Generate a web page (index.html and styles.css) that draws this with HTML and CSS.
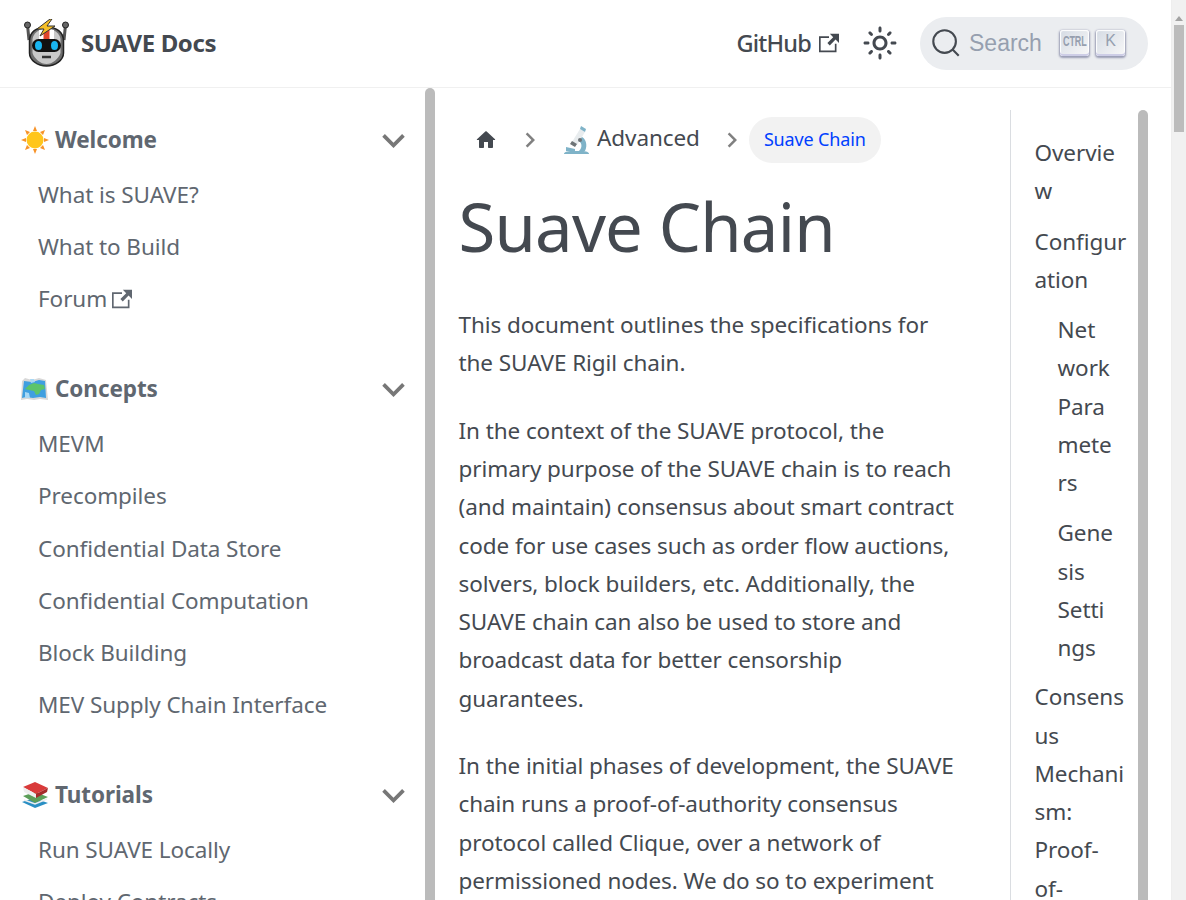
FILE: index.html
```html
<!DOCTYPE html>
<html lang="en">

<head>
    <meta charset="UTF-8">
    <title>Suave Chain | SUAVE Docs</title>
    <link rel="stylesheet" href="styles.css">
</head>

<body>
    <div class="page">
        <nav class="navbar">
            <a class="brand">
                <svg class="brand_logo" viewBox="0 0 45 48">
                    <path d="M3.500 6l1.500 15M41.500 6l-1.500 15" stroke="#555" stroke-width="3" fill="none"/>
                    <circle cx="3.500" cy="6" r="3" fill="#666" stroke="#222"/>
                    <circle cx="41.500" cy="6" r="3" fill="#666" stroke="#222"/>
                    <path d="M22.500 8c-10 0-17 5-17 14v12c0 7 8 13 17 13s17-6 17-13V22c0-9-7-14-17-14z" fill="#6d6d6d" stroke="#222" stroke-width="1.500"/>
                    <path d="M22.500 10c-8 0-13 4-14 10v14c2 6 8 11 14 11s12-5 14-11V20c-1-6-6-10-14-10z" fill="#c9c9c9"/>
                    <path d="M15 11c5-1.500 10-1.500 15 0v9H15z" fill="#fff"/>
                    <path d="M19.500 10h6v10h-6z" fill="#e0452c"/>
                    <rect x="8" y="20" width="29" height="13" rx="6.500" fill="#111"/>
                    <ellipse cx="14.500" cy="26.500" rx="3.500" ry="4.500" fill="#19b5f1"/>
                    <ellipse cx="30.500" cy="26.500" rx="3.500" ry="4.500" fill="#19b5f1"/>
                    <path d="M18 38h9" stroke="#333" stroke-width="2.500"/>
                    <path d="M26 0L13 10h7l-4 7 15-10h-8l5-7z" fill="#f6bf26" stroke="#333" stroke-width="1"/>
                </svg>
                <b>SUAVE Docs</b>
            </a>
            <div class="navbar_right">
                <a class="github">GitHub
                    <svg class="ext_icon" viewBox="0 0 24 24"><path d="M21 13v10h-21v-19h12v2h-10v15h17v-8h2zm3-12h-10.988l4.035 4-6.977 7.070 2.828 2.828 6.977-7.070 4.125 4.172v-11z"/></svg>
                </a>
                <svg class="sun" viewBox="0 0 24 24"><path d="M12,9c1.650,0,3,1.350,3,3s-1.350,3-3,3s-3-1.350-3-3S10.350,9,12,9 M12,7c-2.760,0-5,2.240-5,5s2.240,5,5,5s5-2.240,5-5 S14.760,7,12,7L12,7z M2,13l2,0c0.550,0,1-0.450,1-1s-0.450-1-1-1l-2,0c-0.550,0-1,0.450-1,1S1.450,13,2,13z M20,13l2,0c0.550,0,1-0.450,1-1 s-0.450-1-1-1l-2,0c-0.550,0-1,0.450-1,1S19.450,13,20,13z M11,2v2c0,0.550,0.450,1,1,1s1-0.450,1-1V2c0-0.550-0.450-1-1-1S11,1.450,11,2z M11,20v2c0,0.550,0.450,1,1,1s1-0.450,1-1v-2c0-0.550-0.450-1-1-1C11.450,19,11,19.450,11,20z M5.990,4.580c-0.390-0.390-1.030-0.390-1.410,0 c-0.390,0.390-0.390,1.030,0,1.410l1.060,1.060c0.390,0.390,1.030,0.390,1.410,0s0.390-1.030,0-1.410L5.990,4.580z M18.360,16.950 c-0.390-0.390-1.030-0.390-1.410,0c-0.390,0.390-0.390,1.030,0,1.410l1.060,1.060c0.390,0.390,1.030,0.390,1.410,0c0.390-0.390,0.390-1.030,0-1.410 L18.360,16.950z M19.420,5.990c0.390-0.390,0.390-1.030,0-1.410c-0.390-0.390-1.030-0.390-1.410,0l-1.060,1.060c-0.390,0.390-0.390,1.030,0,1.410 s1.030,0.390,1.410,0L19.420,5.990z M7.050,18.360c0.390-0.390,0.390-1.030,0-1.410c-0.390-0.390-1.030-0.390-1.410,0l-1.060,1.060 c-0.390,0.390-0.390,1.030,0,1.410s1.030,0.390,1.410,0L7.050,18.360z"/></svg>
                <div class="search">
                    <svg class="search_icon" viewBox="0 0 20 20"><path d="M14.386 14.386l4.088 4.088-4.088-4.088c-2.942 2.942-7.712 2.942-10.653 0-2.942-2.942-2.942-7.712 0-10.653 2.942-2.942 7.712-2.942 10.653 0 2.942 2.942 2.942 7.712 0 10.653z"/></svg>
                    <span class="search_text">Search</span>
                    <span class="keys">
                        <kbd class="key"><span class="key_ctrl">CTRL</span></kbd>
                        <kbd class="key">K</kbd>
                    </span>
                </div>
            </div>
        </nav>

        <div class="layout">
            <aside class="sidebar">
                <div class="menu">
                    <div class="cat">
                        <svg class="emoji" viewBox="0 0 28 28">
                            <g fill="#f79329"><path d="M14 0l2 5h-4zM14 28l-2-5h4zM0 14l5-2v4zM28 14l-5 2v-4zM4 4l5 2-3 3zM24 24l-5-2 3-3zM24 4l-2 5-3-3zM4 24l2-5 3 3z"/></g>
                            <circle cx="14" cy="14" r="8.500" fill="#ffc61c"/>
                        </svg>
                        <b>Welcome</b>
                        <svg class="caret" viewBox="0 0 24 24"><path d="M7.410 8.590L12 13.170l4.590-4.580L18 10l-6 6-6-6z"/></svg>
                    </div>
                    <a class="item">What is SUAVE?</a>
                    <a class="item">What to Build</a>
                    <a class="item">Forum <svg class="ext_icon" viewBox="0 0 24 24"><path d="M21 13v10h-21v-19h12v2h-10v15h17v-8h2zm3-12h-10.988l4.035 4-6.977 7.070 2.828 2.828 6.977-7.070 4.125 4.172v-11z"/></svg></a>

                    <div class="cat">
                        <svg class="emoji" viewBox="0 0 28 28">
                            <path d="M1 6l3-3 7 2 7-2 7 2 2 20-8-1-6 1-7-1-6 1z" fill="#d8d8d8"/>
                            <path d="M3 6l8 1 7-2 6 1 1 17-6-1-7 1-7-1-4 1z" fill="#3f9fe0"/>
                            <path d="M8 10l5-2 4 1 6 1 1 4-4 1-2 4-3 1-2-4-5-1-4-1z" fill="#5cc46a"/>
                            <path d="M9 4h4l1 3-4 1zM4 17l4 1 1 5-5 0z" fill="#a8d8f5"/>
                        </svg>
                        <b>Concepts</b>
                        <svg class="caret" viewBox="0 0 24 24"><path d="M7.410 8.590L12 13.170l4.590-4.580L18 10l-6 6-6-6z"/></svg>
                    </div>
                    <a class="item">MEVM</a>
                    <a class="item">Precompiles</a>
                    <a class="item">Confidential Data Store</a>
                    <a class="item">Confidential Computation</a>
                    <a class="item">Block Building</a>
                    <a class="item">MEV Supply Chain Interface</a>

                    <div class="cat">
                        <svg class="emoji" viewBox="0 0 28 28">
                            <path d="M1 21l12-4 14 5-13 5z" fill="#2a8fc4"/>
                            <path d="M2 15l12-4 13 5-13 6z" fill="#5c9e58"/>
                            <path d="M3 19l11 4 12-5" fill="none" stroke="#eee" stroke-width="1.500"/>
                            <path d="M2 6l12-5 13 6-12 6z" fill="#d93a3a"/>
                            <path d="M2 6l13 7v4L3 11z" fill="#eee"/>
                            <path d="M15 13l12-6-1 4-11 6z" fill="#a52a2a"/>
                        </svg>
                        <b>Tutorials</b>
                        <svg class="caret" viewBox="0 0 24 24"><path d="M7.410 8.590L12 13.170l4.590-4.580L18 10l-6 6-6-6z"/></svg>
                    </div>
                    <a class="item">Run SUAVE Locally</a>
                    <a class="item">Deploy Contracts</a>
                </div>
                <div class="rail"><div class="thumb"></div></div>
            </aside>

            <main class="main">
                <article class="article">
                    <ul class="crumbs">
                        <li class="crumb_home"><svg viewBox="0 0 24 24"><path d="M10 19v-5h4v5c0 .550.450 1 1 1h3c.550 0 1-.450 1-1v-7h1.700c.460 0 .680-.570.330-.870L12.670 3.600c-.380-.340-.960-.340-1.340 0l-8.360 7.530c-.340.300-.130.870.330.870H5v7c0 .550.450 1 1 1h3c.550 0 1-.450 1-1z"/></svg></li>
                        <li class="crumb_sep"><svg viewBox="0 0 24 24"><path d="M10 6L8.590 7.410 13.170 12l-4.580 4.590L10 18l6-6z"/></svg></li>
                        <li class="crumb_link">
                            <svg class="emoji" viewBox="0 0 28 28">
                                <path d="M1 28c0-2 3-3 8-3h10c4 0 7 1 7 3z" fill="#7fb3c8"/>
                                <path d="M17 10c6 2 8 9 5 15h-6c4-4 3-9-2-11z" fill="#7fb3c8"/>
                                <path d="M17 3l5 3-8 13-5-3z" fill="#e8ecee"/>
                                <path d="M9 15l5 3-2 3-5-3z" fill="#6e7477"/>
                                <path d="M18 0l5 3-1 3-5-3z" fill="#7fb3c8"/>
                                <path d="M3 21l9 2v2H3z" fill="#7fb3c8"/>
                                <circle cx="17" cy="14" r="2" fill="#6e7477"/>
                            </svg>
                            <span>Advanced</span>
                        </li>
                        <li class="crumb_sep"><svg viewBox="0 0 24 24"><path d="M10 6L8.590 7.410 13.170 12l-4.580 4.590L10 18l6-6z"/></svg></li>
                        <li class="crumb_active"><span>Suave Chain</span></li>
                    </ul>
                    <h1>Suave Chain</h1>
                    <p>This document outlines the specifications for the SUAVE Rigil chain.</p>
                    <p>In the context of the SUAVE protocol, the primary purpose of the SUAVE chain is to reach (and maintain) consensus about smart contract code for use cases such as order flow auctions, solvers, block builders, etc. Additionally, the SUAVE chain can also be used to store and broadcast data for better censorship guarantees.</p>
                    <p>In the initial phases of development, the SUAVE chain runs a proof-of-authority consensus protocol called Clique, over a network of permissioned nodes. We do so to experiment with the protocol in a safe environment.</p>
                </article>

                <div class="toc">
                    <ul class="toc_list">
                        <li>Overvie<br>w</li>
                        <li class="toc_parent">Configur<br>ation
                            <ul class="toc_sub">
                                <li>Net<br>work<br>Para<br>mete<br>rs</li>
                                <li>Gene<br>sis<br>Setti<br>ngs</li>
                            </ul>
                        </li>
                        <li>Consens<br>us<br>Mechani<br>sm:<br>Proof-<br>of-</li>
                    </ul>
                    <div class="rail"><div class="thumb"></div></div>
                </div>
            </main>
        </div>
    </div>

    <div class="page_bar">
        <div class="page_bar_up"></div>
        <div class="page_bar_thumb"></div>
    </div>
</body>

</html>
```
FILE: styles.css
```css
* {
    margin: 0;
    padding: 0;
    box-sizing: border-box;
    list-style: none;
}

html,
body {
    height: 900px;
    overflow: hidden;
}

body {
    display: flex;
    font-family: "Noto Sans", sans-serif;
    font-size: 22.5px;
    line-height: 38.25px;
    letter-spacing: -0.08px;
    color: #444950;
    background-color: #fff;
}

svg {
    flex: none;
}

.page {
    flex: 1;
    min-width: 0;
}

/* window scrollbar */
.page_bar {
    flex: none;
    width: 15px;
    padding: 0 2px 0 2px;
    background-color: #f1f1f1;
    border-left: 1px solid #eee;
}

.page_bar_up {
    width: 0;
    height: 15px;
    margin: 0 auto;
    border: solid transparent;
    border-width: 6px 4px 5px;
    border-top-width: 0;
    border-bottom: 5px solid #a3a3a3;
    transform: translateY(6px);
}

.page_bar_thumb {
    height: 107px;
    margin-top: 10px;
    background-color: #bcbcbc;
}

.emoji {
    width: 28px;
    height: 28px;
}

.ext_icon {
    width: 20px;
    height: 20px;
    fill: currentColor;
}

/* navbar */
.navbar {
    height: 88px;
    padding: 0 23px 1px 24px;
    display: flex;
    align-items: center;
    justify-content: space-between;
    border-bottom: 1px solid #f0f0f0;
}

.brand {
    display: flex;
    align-items: center;
    gap: 12px;
    font-size: 24px;
    letter-spacing: -0.4px;
}

.brand_logo {
    width: 45px;
    height: 48px;
}

.navbar_right {
    display: flex;
    align-items: center;
}

.github {
    display: flex;
    align-items: center;
    gap: 8px;
    font-size: 23.5px;
    font-weight: 500;
    letter-spacing: -0.8px;
}

.sun {
    width: 36px;
    height: 36px;
    margin-left: 23px;
    margin-right: 22px;
    fill: #444950;
}

.search {
    width: 228px;
    height: 53px;
    padding: 0 11px;
    display: flex;
    align-items: center;
    background-color: #ebedf0;
    border-radius: 27px;
}

.search_icon {
    width: 30px;
    height: 30px;
    fill: none;
    stroke: #444950;
    stroke-width: 1.4;
}

.search_text {
    margin-left: 8px;
    font-family: "Liberation Sans", sans-serif;
    font-size: 23px;
    letter-spacing: 0;
    color: #969faf;
}

.keys {
    margin-left: auto;
    margin-right: 12px;
    display: flex;
    gap: 7px;
}

.key {
    width: 29px;
    height: 26px;
    padding-bottom: 3px;
    display: flex;
    align-items: center;
    justify-content: center;
    font-family: "Liberation Sans", sans-serif;
    font-size: 16px;
    color: #969faf;
    background: linear-gradient(-225deg, #d5dbe4, #f8f8f8);
    border-radius: 3px;
    box-shadow: inset 0 -2px 0 0 #cdcde6, inset 0 0 1px 1px #fff, 0 1px 2px 1px rgba(30, 35, 90, 0.4);
}

.key_ctrl {
    display: block;
    font-size: 15px;
    font-weight: bold;
    transform: scaleX(0.6);
}

.layout {
    display: flex;
    align-items: flex-start;
}

/* sidebar */
.sidebar {
    flex: none;
    width: 435px;
    height: 812px;
    display: flex;
    overflow: hidden;
    color: #606770;
}

.rail {
    flex: none;
    width: 10px;
}

.thumb {
    height: 1000px;
    background-color: #bbb;
    border-radius: 5px;
}

.menu {
    flex: 1;
    min-width: 0;
    padding: 26.25px 9px 0 21px;
}

.cat {
    height: 51.5px;
    display: flex;
    align-items: center;
    gap: 6px;
}

.cat b {
    font-weight: 700;
}

.caret {
    width: 45px;
    height: 45px;
    margin-left: auto;
    fill: #777;
}

.item {
    height: 46.25px;
    margin-top: 6px;
    padding-left: 17px;
    display: flex;
    align-items: center;
    gap: 5px;
    white-space: nowrap;
}

.item + .cat {
    margin-top: 41px;
}

/* main */
.main {
    flex: 1;
    min-width: 0;
    padding: 22px 23px 0 23.5px;
    display: flex;
    justify-content: space-between;
    align-items: flex-start;
}

.article {
    width: 505px;
    padding-top: 7px;
}

.crumbs {
    height: 46px;
    display: flex;
    align-items: center;
}

.crumbs svg {
    display: block;
}

.crumb_home {
    margin-left: 15.5px;
}

.crumb_home svg {
    width: 24px;
    height: 24px;
    fill: #444950;
}

.crumb_sep {
    width: 30px;
    margin-left: 17px;
    margin-right: 18px;
}

.crumb_sep svg {
    width: 30px;
    height: 30px;
    fill: #808080;
}

.crumb_link {
    display: flex;
    align-items: center;
    gap: 6px;
}

.crumb_link span {
    padding-bottom: 4px;
}

.crumb_active {
    height: 46px;
    margin-left: -16px;
    padding: 0 15px 2px;
    display: flex;
    align-items: center;
    font-size: 18px;
    letter-spacing: -0.15px;
    color: #0040ff;
    background-color: #f2f2f2;
    border-radius: 23px;
    white-space: nowrap;
}

h1 {
    margin-top: 18px;
    margin-bottom: 35px;
    font-size: 67px;
    font-weight: 400;
    line-height: 90px;
    letter-spacing: -0.8px;
}

p {
    margin-bottom: 29.25px;
}

/* on this page */
.toc {
    flex: none;
    width: 138px;
    height: 1000px;
    display: flex;
    overflow: hidden;
    border-left: 1px solid #dadde1;
}

.toc_list {
    flex: 1;
    min-width: 0;
    padding: 24px 0 0 23.5px;
    white-space: nowrap;
}

.toc li {
    margin-bottom: 12px;
}

.toc .toc_parent {
    margin-bottom: 11px;
}

.toc_sub {
    margin-top: 12px;
    padding-left: 23px;
}

.toc .toc_sub li:last-child {
    margin-bottom: 0;
}
```
